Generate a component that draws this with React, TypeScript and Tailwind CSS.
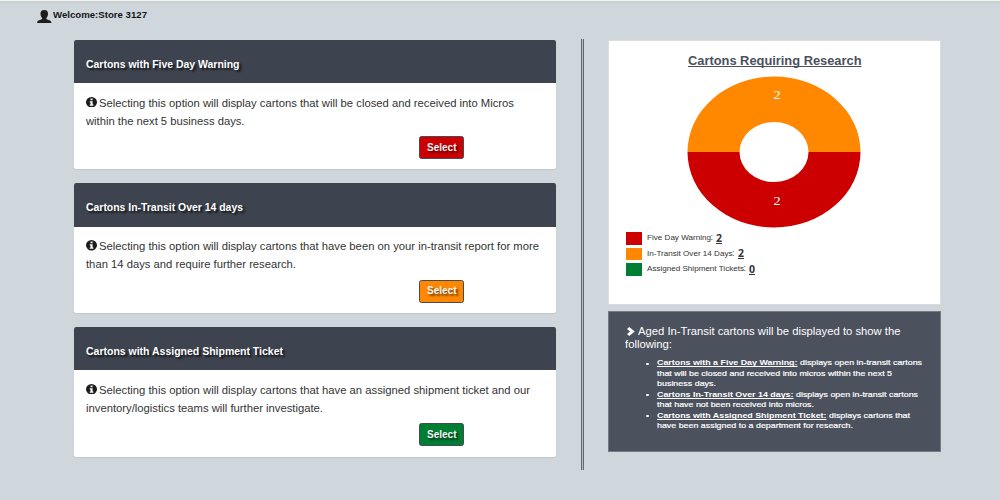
import { useLayoutEffect, useRef, type ReactNode } from 'react'

/** A single line of text stretched horizontally to fill the width of its box. */
function Line({
  className = '',
  underline = false,
  children,
}: {
  className?: string
  underline?: boolean
  children: ReactNode
}) {
  const box = useRef<HTMLSpanElement>(null)
  const text = useRef<HTMLSpanElement>(null)
  useLayoutEffect(() => {
    if (box.current && text.current) {
      const target = box.current.getBoundingClientRect().width
      const natural = text.current.getBoundingClientRect().width
      text.current.style.transform = `scaleX(${target / natural})`
    }
  }, [])
  return (
    <span ref={box} className={`block shrink-0 whitespace-nowrap ${className}`}>
      <span
        ref={text}
        className={
          underline
            ? 'inline-block origin-left align-top underline decoration-1 underline-offset-[1px] [text-decoration-skip-ink:none]'
            : 'inline-block origin-left align-top'
        }
      >
        {children}
      </span>
    </span>
  )
}

function InfoIcon() {
  return (
    <svg viewBox="0 0 16 16" preserveAspectRatio="none" className="mt-[3px] mr-[1.5px] h-[10.5px] w-[11px] shrink-0">
      <circle cx="8" cy="8" r="8" fill="#1b1b1b" />
      <path d="M6.6 2.4h3v2.500h-3zM5.400 6.300h4.200v5h1.200v1.900H5.400v-1.900h1.200V8.200H5.400z" fill="#fff" />
    </svg>
  )
}

type Card = {
  title: string
  titleWidth: string
  lines: [string, string]
  widths: [string, string]
  button: string
}

const cards: Card[] = [
  {
    title: 'Cartons with Five Day Warning',
    titleWidth: 'w-[153.5px]',
    lines: [
      'Selecting this option will display cartons that will be closed and received into Micros',
      'within the next 5 business days.',
    ],
    widths: ['w-[415px]', 'w-[158.5px]'],
    button: 'bg-[#cc0000]',
  },
  {
    title: 'Cartons In-Transit Over 14 days',
    titleWidth: 'w-[157px]',
    lines: [
      'Selecting this option will display cartons that have been on your in-transit report for more',
      'than 14 days and require further research.',
    ],
    widths: ['w-[440px]', 'w-[210px]'],
    button: 'bg-[#ff8800]',
  },
  {
    title: 'Cartons with Assigned Shipment Ticket',
    titleWidth: 'w-[197px]',
    lines: [
      'Selecting this option will display cartons that have an assigned shipment ticket and our',
      'inventory/logistics teams will further investigate.',
    ],
    widths: ['w-[431px]', 'w-[237px]'],
    button: 'bg-[#007e33]',
  },
]

function OptionCard({ card }: { card: Card }) {
  return (
    <section className="h-[129.7px] overflow-hidden rounded-[2px] bg-white shadow-[0_1px_1px_rgba(0,0,0,0.08)]">
      <header className="h-[43.5px] bg-[#3e444f] pt-[17px] pl-3">
        <Line
          className={`text-[10px] leading-4 font-bold text-white [text-shadow:2px_2px_2px_rgba(0,0,0,0.75)] ${card.titleWidth}`}
        >
          {card.title}
        </Line>
      </header>
      <div className="pt-[10.5px] pl-3 text-[10.5px] leading-[18px] text-[#333]">
        <div className="flex">
          <InfoIcon />
          <Line className={card.widths[0]}>{card.lines[0]}</Line>
        </div>
        <Line className={card.widths[1]}>{card.lines[1]}</Line>
      </div>
      <button
        className={`mt-[6.5px] ml-[344.5px] flex h-[23px] w-[45.5px] items-center justify-center rounded-[2.5px] border border-[#444b55] ${card.button}`}
      >
        <Line className="w-[29.5px] text-[10px] leading-4 font-bold text-[#f4f4f4] [text-shadow:2px_2px_2px_rgba(0,0,0,0.6)]">
          Select
        </Line>
      </button>
    </section>
  )
}

function Donut() {
  return (
    <svg viewBox="0 0 174 152" className="mt-[7.4px] ml-[78px] block h-[152px] w-[174px]">
      <path d="M.5 76A86.5 75.5 0 0 1 173.5 76H121.5A34.5 30 0 0 0 52.5 76Z" fill="#ff8800" />
      <path d="M.5 76A86.5 75.5 0 0 0 173.5 76H121.5A34.5 30 0 0 1 52.5 76Z" fill="#cc0000" />
      <g fill="#fff" fontSize="12.5" textAnchor="middle" className="font-['Liberation_Serif',serif]">
        <text transform="translate(90.2 23.3) scale(1.15 1)">2</text>
        <text transform="translate(90.2 129.1) scale(1.15 1)">2</text>
      </g>
    </svg>
  )
}

const legend = [
  { label: 'Five Day Warning', width: 'w-[64px]', value: 2, color: 'bg-[#cc0000]' },
  { label: 'In-Transit Over 14 Days', width: 'w-[85.5px]', value: 2, color: 'bg-[#ff8800]' },
  { label: 'Assigned Shipment Tickets', width: 'w-[97px]', value: 0, color: 'bg-[#007e33]' },
]

const notes = [
  {
    term: 'Cartons with a Five Day Warning:',
    termWidth: 'w-[140.5px]',
    first: 'displays open in-transit cartons',
    firstWidth: 'w-[122px]',
    rest: [
      { text: 'that will be closed and received into micros within the next 5', width: 'w-[235px]' },
      { text: 'business days.', width: 'w-[59px]' },
    ],
  },
  {
    term: 'Cartons In-Transit Over 14 days:',
    termWidth: 'w-[136.5px]',
    first: 'displays open in-transit cartons',
    firstWidth: 'w-[122px]',
    rest: [{ text: 'that have not been received into micros.', width: 'w-[157px]' }],
  },
  {
    term: 'Cartons with Assigned Shipment Ticket:',
    termWidth: 'w-[169.5px]',
    first: 'displays cartons that',
    firstWidth: 'w-[81px]',
    rest: [{ text: 'have been assigned to a department for research.', width: 'w-[196px]' }],
  },
]

export default function App() {
  return (
    <div className="h-[500px] w-[1000px] overflow-hidden bg-[#cfd7dd] font-['Liberation_Sans',Arial,sans-serif]">
      <div className="h-[3px] border-b-2 border-[#c8d0d0] bg-[#f1f3f3]" />
      <header className="flex h-[36.6px] pt-[3px] pl-[37px]">
        <svg viewBox="0 0 30 26" preserveAspectRatio="none" className="mt-[3.5px] mr-[1.5px] h-[13px] w-[14.5px]">
          <path
            d="M15 0c5.8 0 7.800 3 7.800 7.400 0 3.800-1.600 6.600-3.400 8.400v1.700c0 1.200 1.300 1.500 3.400 2 4.200 1.100 6.800 2.300 7.200 6.500H0c.4-4.200 3-5.400 7.200-6.500 2.100-.5 3.400-.8 3.400-2v-1.700C8.800 14 7.200 11.200 7.200 7.400 7.200 3 9.200 0 15 0z"
            fill="#1d1d1d"
          />
        </svg>
        <Line className="w-[94px] text-[9.5px] leading-[17px] font-bold text-[#151515]">Welcome:Store 3127</Line>
      </header>
      <main className="flex pl-[74px]">
        <div className="flex w-[482px] flex-col gap-[14px]">
          {cards.map((card) => (
            <OptionCard key={card.title} card={card} />
          ))}
        </div>
        <div className="-mt-[0.6px] ml-[25px] h-[431px] w-[3px] border-x border-[#626a75] bg-[#b3bac2]" />
        <div className="ml-[24px] flex w-[333px] flex-col gap-[6px]">
          <section className="h-[265px] border border-[#d9dddf] bg-white pt-[12px]">
            <h2 className="pl-[78.5px]">
              <Line underline className="w-[173.5px] text-[12px] leading-4 font-bold text-[#4b515d]">
                Cartons Requiring Research
              </Line>
            </h2>
            <Donut />
            <ul className="mt-[2.6px] flex flex-col pl-[17px]">
              {legend.map((item) => (
                <li key={item.label} className="flex h-[15.5px] items-center">
                  <span className={`mr-[4.5px] h-[12.5px] w-[16px] ${item.color}`} />
                  <Line className={`text-[7.5px] leading-[14px] text-[#333] ${item.width}`}>{item.label}</Line>
                  <span className="w-[5.5px] pb-[2px] text-[9px] leading-[12px] text-[#555]">:</span>
                  <Line
                    underline
                    className="w-[6px] font-['Open_Sans',sans-serif] text-[10px] leading-[13px] font-bold text-[#333]"
                  >
                    {item.value}
                  </Line>
                </li>
              ))}
            </ul>
          </section>
          <section className="h-[141px] border border-[#747b84] bg-[#4b515d] pt-[13px] pl-[15.5px] text-white">
            <div className="flex text-[10.5px] leading-[13.3px]">
              <svg
                viewBox="0 0 16 18"
                preserveAspectRatio="none"
                className="mt-[2px] mr-[3px] ml-[2px] h-[9px] w-[8px] shrink-0"
              >
                <path d="M0 4 4.500 0 15.500 9 4.500 18 0 14 6 9z" fill="#fff" />
              </svg>
              <Line className="w-[262.5px]">Aged In-Transit cartons will be displayed to show the</Line>
            </div>
            <Line className="w-[47px] text-[10.5px] leading-[13.3px]">following:</Line>
            <ul className="mt-[7px] text-[8px] leading-[10.55px] [-webkit-text-stroke:0.2px_#fff]">
              {notes.map((note) => (
                <li key={note.term} className="flex">
                  <span className="mt-[4.5px] mr-[8px] ml-[21.5px] h-[2px] w-[2.5px] shrink-0 rounded-full bg-white" />
                  <div>
                    <div className="flex gap-[3px]">
                      <Line underline className={`font-bold [-webkit-text-stroke:0px] ${note.termWidth}`}>
                        {note.term}
                      </Line>
                      <Line className={note.firstWidth}>{note.first}</Line>
                    </div>
                    {note.rest.map((line) => (
                      <Line key={line.text} className={line.width}>
                        {line.text}
                      </Line>
                    ))}
                  </div>
                </li>
              ))}
            </ul>
          </section>
        </div>
      </main>
    </div>
  )
}
